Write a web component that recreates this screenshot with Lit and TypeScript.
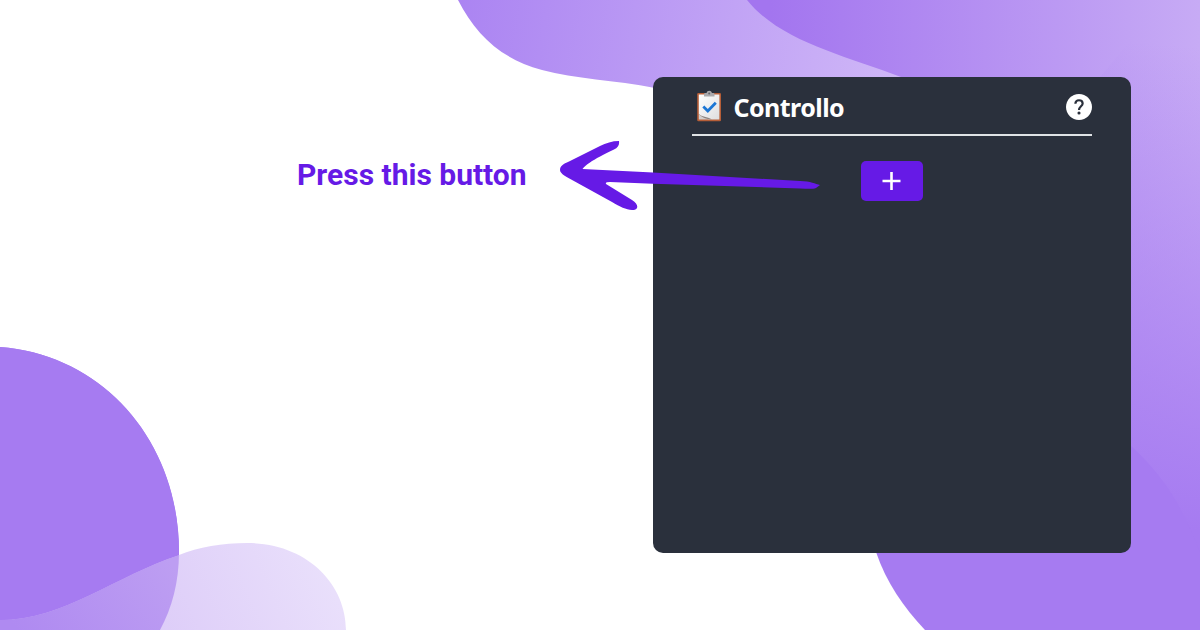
import { LitElement, html, css } from "lit";
import { customElement } from "lit/decorators.js";

@customElement("checklist-card")
class ChecklistCard extends LitElement {
  static styles = css`
    :host {
      display: block;
      box-sizing: border-box;
      width: 478px;
      height: 476px;
      padding: 9px 39px 0 38px;
      border-radius: 10px;
      background: #2a303c;
      color: #fff;
    }
    header {
      display: flex;
      align-items: center;
      height: 48px;
      padding-left: 3px;
      margin-left: 0.5px;
      border-bottom: 2px solid #dfe3e6;
    }
    .clip { display: block; width: 28px; height: 34px; margin-bottom: 8px; }
    h1 {
      margin: 0 0 0 11px;
      font: 700 25px/32px "Noto Sans", "Open Sans", sans-serif;
      letter-spacing: -0.55px;
      flex: 1;
      padding-bottom: 6px;
    }
    .help { display: block; width: 26px; height: 26px; margin-bottom: 6px; }
    .actions { display: flex; justify-content: center; padding: 25px 0 0; }
    button {
      display: grid;
      place-items: center;
      width: 62px;
      height: 40px;
      padding: 0;
      border: 0;
      border-radius: 5px;
      background: #661ae6;
    }
  `;

  render() {
    return html`
      <header>
        <svg class="clip" viewBox="0 0 28 34">
          <defs>
            <linearGradient id="paper" x1="0" y1="0" x2="1" y2="1">
              <stop offset="0" stop-color="#fff" />
              <stop offset="1" stop-color="#dededf" />
            </linearGradient>
          </defs>
          <rect x="2.2" y="4" width="23.8" height="28.3" rx="1.2" fill="#b65e38" />
          <path d="M3.8 5.4H24.4V30.6H16C10 29.5 7 28 3.8 25Z" fill="url(#paper)" />
          <path d="M3.8 25C7 28 11 29.8 16 30.6H3.8Z" fill="#d3cfcd" />
          <path d="M3.8 25C7 28 12 27.3 17 30.6C11 30.2 7 28.5 3.8 25Z" fill="#8c8582" />
          <path d="M9 7.6V5.2Q9 4 10.5 4H11.5Q12 1.8 14.2 1.8T17 4H18Q19.5 4 19.5 5.2V7.6Z" fill="#aaa9ac" />
          <circle cx="14.2" cy="4.5" r="1" fill="#66666c" />
          <path d="M8.3 17.6L12.8 22L20.8 13.8" fill="none" stroke="#1c76d5" stroke-width="2.8" />
        </svg>
        <h1>Controllo</h1>
        <svg class="help" viewBox="2 2 20 20">
          <path fill="#fff" d="M12 2C6.48 2 2 6.48 2 12s4.48 10 10 10 10-4.48 10-10S17.52 2 12 2z" />
          <path fill="none" stroke="#2a303c" stroke-width="1.7" d="M9.2 9.5C9.3 7.7 10.4 6.8 12 6.8C13.7 6.8 14.8 7.9 14.8 9.3C14.8 11.4 12 11.6 12 14.4" />
          <circle cx="12" cy="16.6" r="1.2" fill="#2a303c" />
        </svg>
      </header>
      <div class="actions">
        <button aria-label="Add">
          <svg width="20" height="20" viewBox="0 0 20 20">
            <path d="M9.500 1V19M0.500 10H18.500" fill="none" stroke="#fff" stroke-width="2.6" />
          </svg>
        </button>
      </div>
    `;
  }
}

@customElement("app-root")
class AppRoot extends LitElement {
  static styles = css`
    :host {
      display: block;
      position: relative;
      width: 1200px;
      height: 630px;
      overflow: hidden;
      background: #fff;
    }
    .backdrop, .arrow {
      position: absolute;
      inset: 0;
      width: 1200px;
      height: 630px;
      pointer-events: none;
    }
    .stage {
      position: relative;
      display: flex;
      align-items: flex-start;
      justify-content: space-between;
      padding: 77px 69px 0 297px;
    }
    .hint {
      margin: 79px 0 0;
      white-space: nowrap;
      font: 700 30px/38px Roboto, sans-serif;
      color: #661ae6;
    }
  `;

  render() {
    return html`
      <svg class="backdrop" viewBox="0 0 1200 630">
        <defs>
          <linearGradient id="band" gradientUnits="userSpaceOnUse" x1="460" y1="0" x2="900" y2="70">
            <stop offset="0" stop-color="#ab84f2" />
            <stop offset="1" stop-color="#cfb7f7" />
          </linearGradient>
          <linearGradient id="sweep" gradientUnits="userSpaceOnUse" x1="770" y1="0" x2="1200" y2="0">
            <stop offset="0" stop-color="#a375ef" />
            <stop offset="1" stop-color="#c7abf5" />
          </linearGradient>
          <linearGradient id="fall" gradientUnits="userSpaceOnUse" x1="1120" y1="40" x2="1080" y2="520">
            <stop offset="0" stop-color="#a67bf1" stop-opacity="0" />
            <stop offset="1" stop-color="#a67bf1" />
          </linearGradient>
          <linearGradient id="hill" gradientUnits="userSpaceOnUse" x1="140" y1="640" x2="320" y2="560">
            <stop offset="0" stop-color="#dccbf8" />
            <stop offset="1" stop-color="#e9dffb" />
          </linearGradient>
          <linearGradient id="shade" gradientUnits="userSpaceOnUse" x1="30" y1="650" x2="170" y2="560">
            <stop offset="0" stop-color="#af8af1" />
            <stop offset="1" stop-color="#bd9ef2" />
          </linearGradient>
          <clipPath id="disc">
            <path d="M0 347C105 355 179 443 179 552C179 582 172 608 160 630H0Z" />
          </clipPath>
        </defs>
        <path fill="url(#band)" d="M458 0C476 35 501 59 542 70C575 79 615 80 655 88L920 100V0Z" />
        <path fill="url(#sweep)" d="M747 0C780 41 843 55 901 77L1000 200L1100 560H1200V0Z" />
        <path fill="url(#fall)" d="M1100 77L1131 40H1200V560H1100Z" />
        <path fill="#a67bf1" d="M876 552C886 582 904 608 925 630H1200V552C1183 510 1168 480 1131 446L1000 400Z" />
        <path fill="#a67bf1" d="M0 347C105 355 179 443 179 552C179 582 172 608 160 630H0Z" />
        <path fill="url(#hill)" d="M0 620C63 620 117 575 179 555C198 547 223 543 247 543C307 543 346 584 346 630H0Z" />
        <path fill="url(#shade)" clip-path="url(#disc)" d="M0 620C63 620 117 575 179 555L200 630H0Z" />
        <path fill="#a67bf1" d="M0 347C105 355 179 443 179 552V555C117 575 63 620 0 620Z" />
      </svg>
      <div class="stage">
        <p class="hint">Press this button</p>
        <checklist-card></checklist-card>
      </div>
      <svg class="arrow" viewBox="0 0 1200 630">
        <path fill="#661ae6" d="M619 141C619.5 145 618 147.500 614 149.500C604 154 595 159 590 162.500C586 165 584 167 582.500 169L653 172.600L800 181C811 181 815 184 820 185L816 188C812 189.500 806 188.500 800 188.500L653 183.700L610 182Q605 182 606 184L632 200C640 205 638 211 632 210C626 209.500 620 207 612 202L573 180.500C567 177 560 174 560 170C560 166 563 164 569 161.500L600 146C606 143 612 141 619 141Z" />
      </svg>
    `;
  }
}
